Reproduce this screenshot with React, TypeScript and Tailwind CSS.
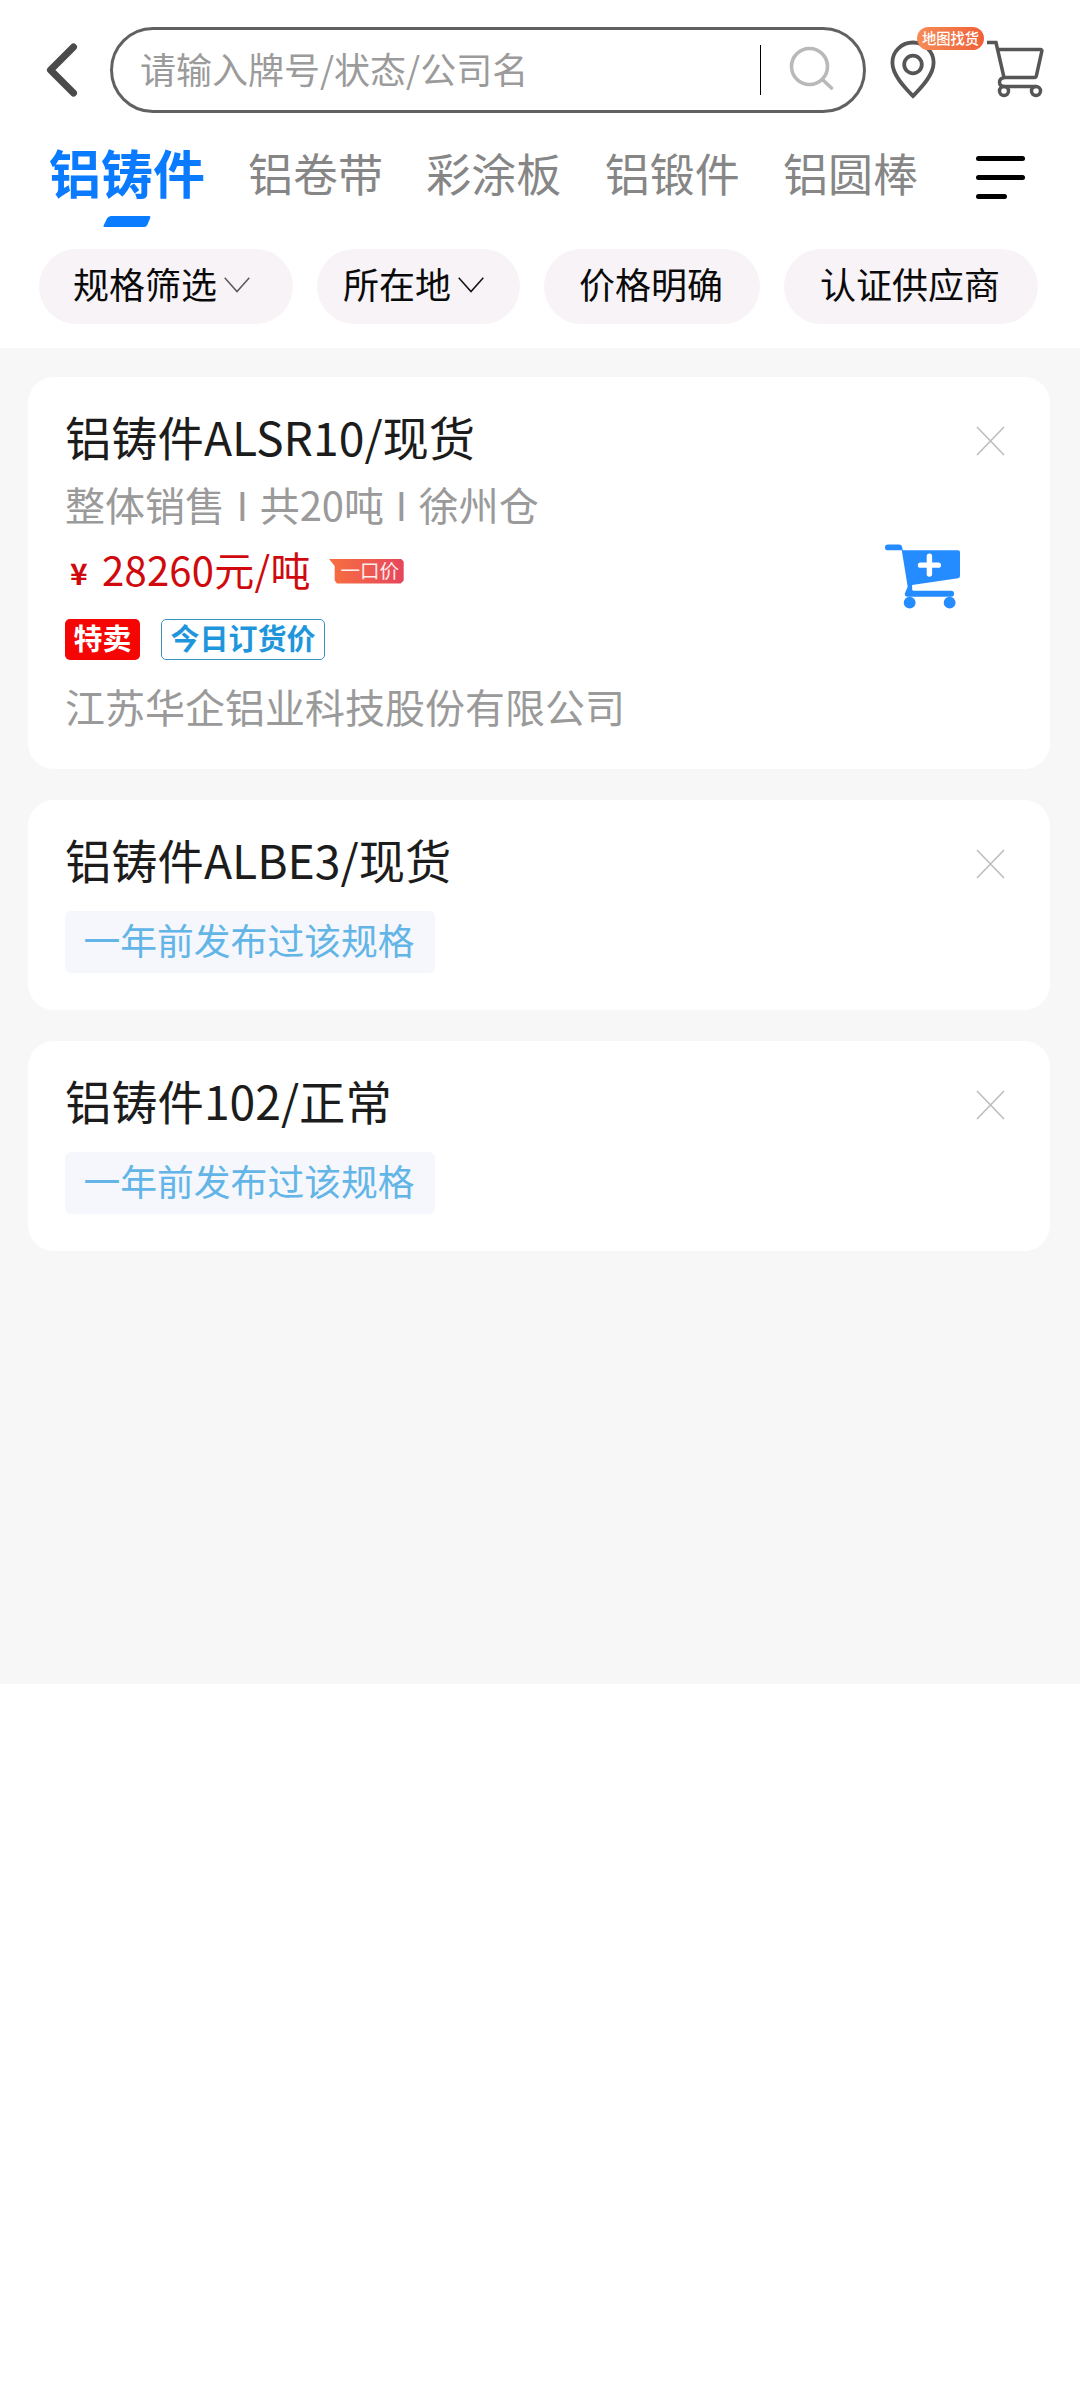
import type { ReactNode } from 'react'

const tabs = ['铝卷带', '彩涂板', '铝锻件', '铝圆棒']

export default function App() {
  return (
    <div className="w-[1080px] h-[2387px] bg-white font-['Noto_Sans_CJK_SC',sans-serif]">
      <SearchHeader />
      <CategoryTabs />
      <FilterBar />
      <main className="h-[1336px] bg-[#f7f7f7] pl-7 pr-[30px] pt-[29px] flex flex-col gap-[31px]">
        <Card title="铝铸件ALSR10/现货" className="h-[392px]">
          <OfferDetails />
        </Card>
        <Card title="铝铸件ALBE3/现货" className="h-[210px]">
          <HistoryTag />
        </Card>
        <Card title="铝铸件102/正常" className="h-[210px]">
          <HistoryTag />
        </Card>
      </main>
    </div>
  )
}

function SearchHeader() {
  return (
    <header className="h-[113px] pt-[27px] flex items-start">
      <button className="w-[110px] h-[86px] pl-[45px] flex items-center">
        <svg width="34" height="56" viewBox="0 0 34 56" fill="none" stroke="#4a4a4a" strokeWidth="7" strokeLinecap="round" strokeLinejoin="round">
          <path d="M28.5 5 5.5 28l23 23" />
        </svg>
      </button>
      <div className="w-[756px] h-[86px] rounded-full border-[3px] border-[#616161] flex items-center">
        <span className="flex-1 pl-[27px] pb-[4px] text-[36px] leading-[52px] text-[#9b9b9b]">请输入牌号/状态/公司名</span>
        <span className="w-px h-[50px] bg-black" />
        <svg className="ml-[27px] mr-[27px]" width="48" height="48" viewBox="0 0 48 48" fill="none" stroke="#b9b9b9" strokeWidth="3.6" strokeLinecap="round">
          <circle cx="21.5" cy="20.5" r="18" />
          <path d="m35 34 8.5 8" />
        </svg>
      </div>
      <div className="relative ml-[22px] mt-[12px]">
        <svg width="50" height="62" viewBox="0 0 50 62" fill="none" stroke="#565656" strokeWidth="3.8">
          <path d="M25 57C20.500 52 4.400 38 4.400 23.500a20.600 20 0 0 1 41.200 0C45.600 38 29.500 52 25 57Z" />
          <circle cx="25" cy="25.500" r="8.800" />
        </svg>
        <span className="absolute left-[29px] -top-[12px] w-[67px] h-[23px] rounded-full bg-linear-to-r from-[#f58b55] to-[#f0603a] text-white text-[14.3px] leading-[21px] font-medium text-center whitespace-nowrap">
          地图找货
        </span>
      </div>
      <svg className="ml-[48px] mt-[10px]" width="62" height="62" viewBox="0 0 62 62" fill="none" stroke="#565656" strokeWidth="3.5">
        <path d="M1 5.500h9l8 35h30.500q1.500 0 1.800-1.500l5.500-24.500q.4-2-1.500-2H12" />
        <path d="M18 40.500q-4.500 1-4.500 4.800t4.500 4.200h32" />
        <circle cx="18" cy="54" r="4.500" />
        <circle cx="50" cy="54" r="4.500" />
      </svg>
    </header>
  )
}

function CategoryTabs() {
  return (
    <nav className="h-[136px] flex items-start">
      <div className="ml-[49px] w-[156px] mt-[23px] flex flex-col items-center">
        <span className="text-[52px] leading-[72px] font-bold text-[#0a7aff]">铝铸件</span>
        <svg className="mt-[8px]" width="48" height="11" viewBox="0 0 48 11" fill="#0a7cff">
          <path d="M8 0h38q2 0 1.200 2L44.500 8.500Q43.500 11 41 11H1.500Q0 11 .6 9.500L4 2.500Q5.200 0 8 0Z" />
        </svg>
      </div>
      <div className="ml-[43px] mt-[27px] flex gap-[43.3px] text-[45px] leading-[66px] text-[#868686]">
        {tabs.map(tab => <span key={tab}>{tab}</span>)}
      </div>
      <button className="ml-[58px] mt-[43px] flex flex-col gap-[14px]">
        <span className="w-[49px] h-[5px] rounded-full bg-black" />
        <span className="w-[49px] h-[5px] rounded-full bg-black" />
        <span className="w-[31px] h-[5px] rounded-full bg-black" />
      </button>
    </nav>
  )
}

function FilterBar() {
  return (
    <div className="h-[99px] pl-[39px] flex items-start text-[36px] leading-[69px] text-[#0a0a0a]">
      <button className="w-[254px] h-[75px] pl-[34px] rounded-full bg-[#f7f3f7] flex">
        规格筛选<Chevron color="#5a5a5a" />
      </button>
      <button className="ml-6 w-[203px] h-[75px] pl-[26px] rounded-full bg-[#f7f3f7] flex">
        所在地<Chevron color="#111" />
      </button>
      <button className="ml-6 w-[216px] h-[75px] pr-[2px] rounded-full bg-[#f7f3f7] flex justify-center">价格明确</button>
      <button className="ml-6 w-[254px] h-[75px] pr-[2px] rounded-full bg-[#f7f3f7] flex justify-center">认证供应商</button>
    </div>
  )
}

function Chevron({ color }: { color: string }) {
  return (
    <svg className="ml-[7px] mt-[28px]" width="26" height="16" viewBox="0 0 26 16" fill="none" stroke={color} strokeWidth="1.5">
      <path d="M.7.7 13 14.5 25.300.7" />
    </svg>
  )
}

function Card({ title, className, children }: { title: string; className: string; children: ReactNode }) {
  return (
    <section className={`rounded-[26px] bg-white pl-[37px] pt-[28px] ${className}`}>
      <div className="h-[66px] pr-[44px] flex justify-between">
        <h2 className="text-[46.3px] leading-[62px] text-[#1c1c1c]">{title}</h2>
        <svg className="mt-[21px]" width="30" height="30" viewBox="0 0 30 30" stroke="#bdbdbd" strokeWidth="1.6">
          <path d="m1 1 27 28M28 1 1 29" />
        </svg>
      </div>
      {children}
    </section>
  )
}

function OfferDetails() {
  return (
    <div className="flex">
      <div className="flex-1 text-[40px] text-[#9a9a9a]">
        <p className="leading-[66px] [word-spacing:2.5px]">整体销售 I 共20吨 I 徐州仓</p>
        <div className="h-[66px] flex items-center text-[#d0090e]">
          <span className="w-[37px] pl-[5px] pt-[5px] text-[30px] font-bold">¥</span>
          <span className="pb-[2px] leading-[60px] tracking-[.25px]">28260元/吨</span>
          <FixedPriceTag />
        </div>
        <div className="mt-[16px] flex gap-[21px] text-[29px] leading-[37px] font-bold">
          <span className="w-[75px] h-[41px] rounded-[5px] bg-[#f60505] text-white text-center">特卖</span>
          <span className="w-[164px] h-[41px] rounded-[5px] border border-[#3a93bd] text-[#1f96dc] text-center leading-[35px]">今日订货价</span>
        </div>
        <p className="mt-[13px] leading-[66px]">江苏华企铝业科技股份有限公司</p>
      </div>
      <svg className="mt-[72px] mr-[89px]" width="77" height="68" viewBox="0 0 78 68" fill="#248cff">
        <path d="M4 1h11q3 0 3.500 3l.5 3h56q2 0 2 2v24q0 2-2 2.200L28.500 42v5l1 1H68a3 3 0 0 1 0 6H24q-3 0-3-3l3-7-6-37H4a3 3 0 0 1 0-6Z" />
        <circle cx="26" cy="60" r="6" />
        <circle cx="66.500" cy="60" r="6" />
        <path d="M46 13v18M37 22h18" stroke="#fff" strokeWidth="5.5" strokeLinecap="round" />
      </svg>
    </div>
  )
}

function FixedPriceTag() {
  return (
    <span className="ml-[18px] mt-[2px] w-[75px] h-[25px] pl-[7px] bg-linear-to-r from-[#f76f3c] to-[#e6455c] [clip-path:polygon(0_0,96%_0,100%_12%,100%_88%,96%_100%,11%_100%,8%_88%,8%_30%)] text-[19.5px] leading-[22px] text-white/90 text-center">
      一口价
    </span>
  )
}

function HistoryTag() {
  return (
    <span className="mt-[17px] w-[370px] h-[62px] pr-[2px] rounded-[6px] bg-[#f5f7fd] block text-center text-[36.8px] leading-[57px] text-[#62b5e6]">
      一年前发布过该规格
    </span>
  )
}
